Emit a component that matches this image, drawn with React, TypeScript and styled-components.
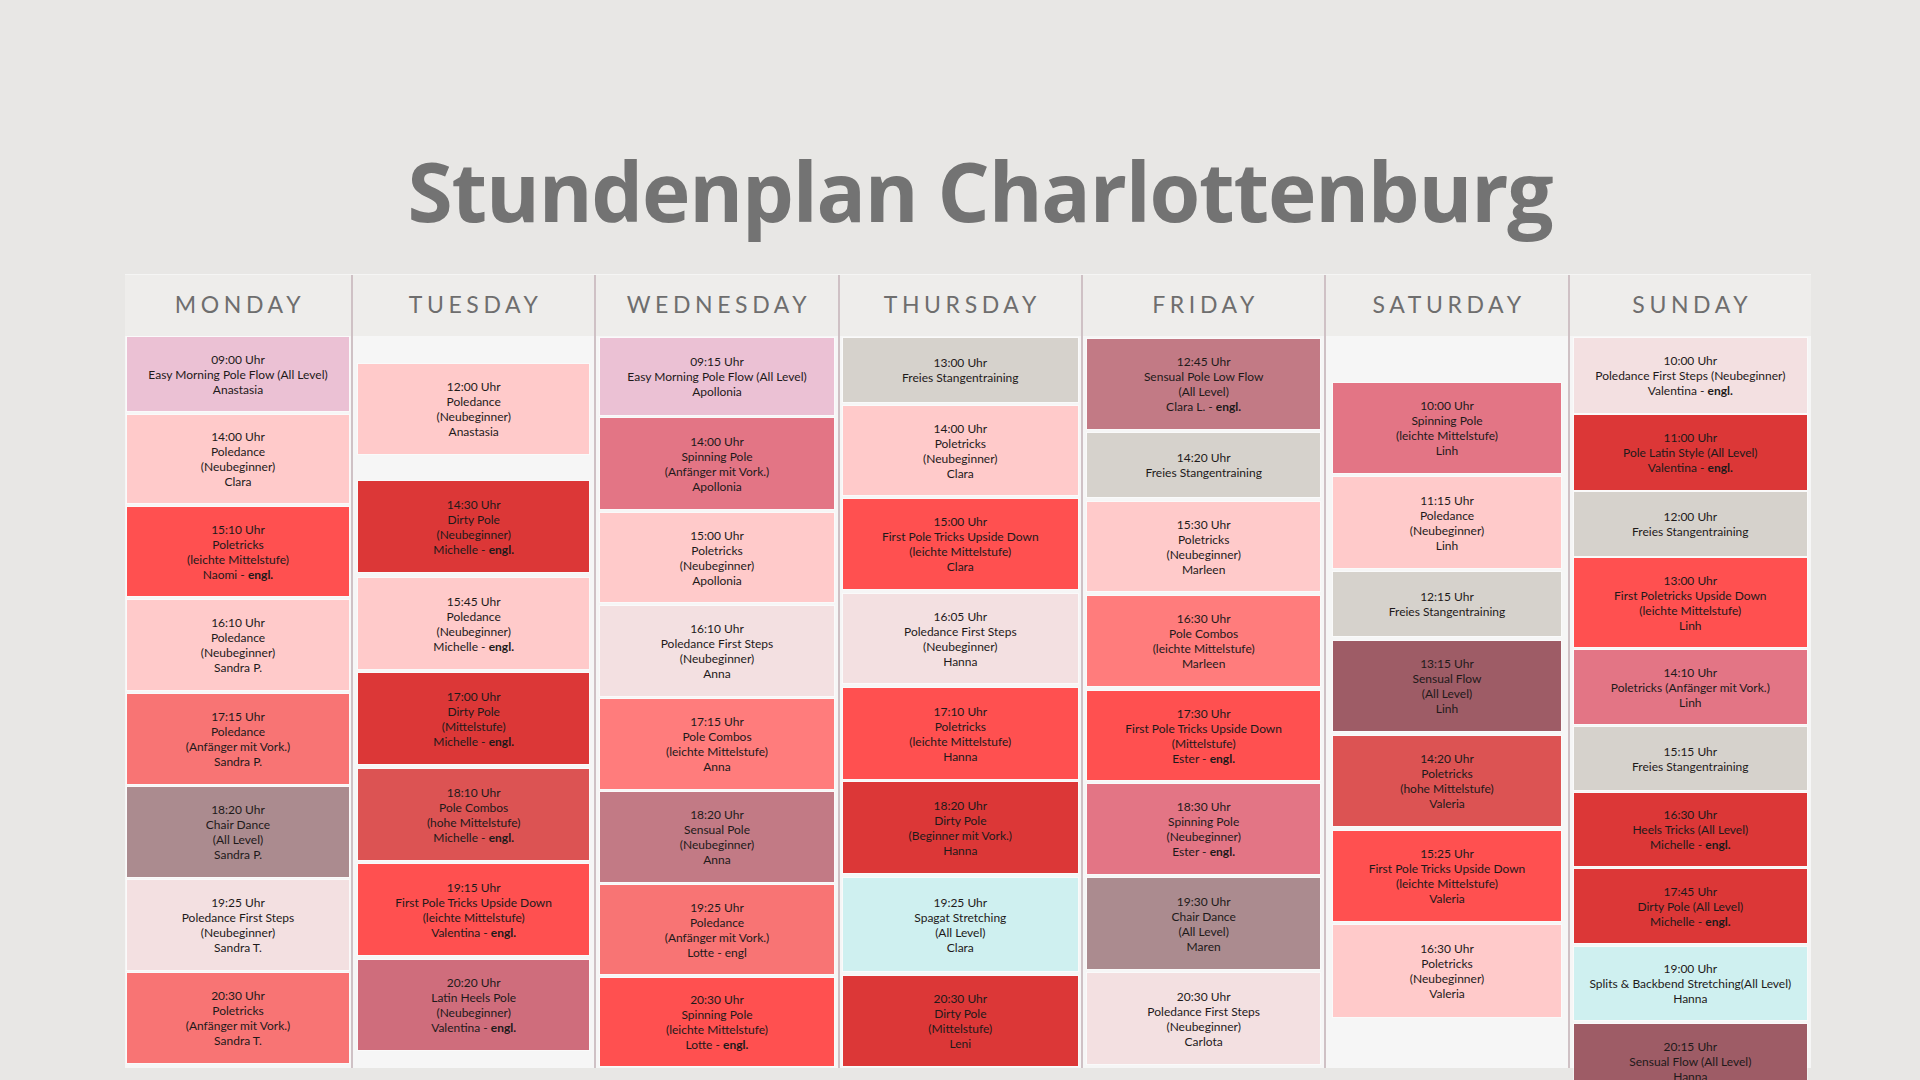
import React from "react";
import styled, { createGlobalStyle } from "styled-components";

const GlobalStyle = createGlobalStyle`
  html, body {
    margin: 0;
    padding: 0;
    overflow: hidden;
    background: #e8e7e5;
  }
  * { box-sizing: border-box; }
`;

const COLORS = {
  lilac: "#ebc1d4",
  blush: "#ffcaca",
  red: "#ff5050",
  salmon: "#f87474",
  mauve: "#ab8b8f",
  shell: "#f3e0e1",
  crimson: "#dc3737",
  brick: "#dc5353",
  rose: "#cf6d7c",
  pink: "#e37585",
  coral: "#ff7c7c",
  dusty: "#c27a85",
  stone: "#d6d2cc",
  ice: "#cff0f0",
  wine: "#9e5c66",
};

type Tone = keyof typeof COLORS;

type Lesson = {
  gap: number;
  h: number;
  tone: Tone;
  lines: string[];
  engl?: boolean;
};

type Day = {
  name: string;
  padX: number;
  lessons: Lesson[];
};

const days: Day[] = [
  {
    name: "Monday",
    padX: 2,
    lessons: [
      { gap: 1, h: 74, tone: "lilac", lines: ["09:00 Uhr", "Easy Morning Pole Flow (All Level)", "Anastasia"] },
      { gap: 4, h: 88, tone: "blush", lines: ["14:00 Uhr", "Poledance", "(Neubeginner)", "Clara"] },
      { gap: 4, h: 89, tone: "red", lines: ["15:10 Uhr", "Poletricks", "(leichte Mittelstufe)", "Naomi"], engl: true },
      { gap: 4, h: 90, tone: "blush", lines: ["16:10 Uhr", "Poledance", "(Neubeginner)", "Sandra P."] },
      { gap: 4, h: 90, tone: "salmon", lines: ["17:15 Uhr", "Poledance", "(Anfänger mit Vork.)", "Sandra P."] },
      { gap: 3, h: 90, tone: "mauve", lines: ["18:20 Uhr", "Chair Dance", "(All Level)", "Sandra P."] },
      { gap: 3, h: 90, tone: "shell", lines: ["19:25 Uhr", "Poledance First Steps", "(Neubeginner)", "Sandra T."] },
      { gap: 3, h: 90, tone: "salmon", lines: ["20:30 Uhr", "Poletricks", "(Anfänger mit Vork.)", "Sandra T."] },
    ],
  },
  {
    name: "Tuesday",
    padX: 5,
    lessons: [
      { gap: 28, h: 90, tone: "blush", lines: ["12:00 Uhr", "Poledance", "(Neubeginner)", "Anastasia"] },
      { gap: 27, h: 91, tone: "crimson", lines: ["14:30 Uhr", "Dirty Pole", "(Neubeginner)", "Michelle"], engl: true },
      { gap: 6, h: 91, tone: "blush", lines: ["15:45 Uhr", "Poledance", "(Neubeginner)", "Michelle"], engl: true },
      { gap: 4, h: 91, tone: "crimson", lines: ["17:00 Uhr", "Dirty Pole", "(Mittelstufe)", "Michelle"], engl: true },
      { gap: 5, h: 91, tone: "brick", lines: ["18:10 Uhr", "Pole Combos", "(hohe Mittelstufe)", "Michelle"], engl: true },
      { gap: 4, h: 91, tone: "red", lines: ["19:15 Uhr", "First Pole Tricks Upside Down", "(leichte Mittelstufe)", "Valentina"], engl: true },
      { gap: 5, h: 90, tone: "rose", lines: ["20:20 Uhr", "Latin Heels Pole", "(Neubeginner)", "Valentina"], engl: true },
    ],
  },
  {
    name: "Wednesday",
    padX: 4,
    lessons: [
      { gap: 2, h: 77, tone: "lilac", lines: ["09:15 Uhr", "Easy Morning Pole Flow (All Level)", "Apollonia"] },
      { gap: 3, h: 91, tone: "pink", lines: ["14:00 Uhr", "Spinning Pole", "(Anfänger mit Vork.)", "Apollonia"] },
      { gap: 4, h: 89, tone: "blush", lines: ["15:00 Uhr", "Poletricks", "(Neubeginner)", "Apollonia"] },
      { gap: 4, h: 90, tone: "shell", lines: ["16:10 Uhr", "Poledance First Steps", "(Neubeginner)", "Anna"] },
      { gap: 3, h: 90, tone: "coral", lines: ["17:15 Uhr", "Pole Combos", "(leichte Mittelstufe)", "Anna"] },
      { gap: 3, h: 90, tone: "dusty", lines: ["18:20 Uhr", "Sensual Pole", "(Neubeginner)", "Anna"] },
      { gap: 3, h: 89, tone: "salmon", lines: ["19:25 Uhr", "Poledance", "(Anfänger mit Vork.)", "Lotte - engl"] },
      { gap: 4, h: 88, tone: "red", lines: ["20:30 Uhr", "Spinning Pole", "(leichte Mittelstufe)", "Lotte"], engl: true },
    ],
  },
  {
    name: "Thursday",
    padX: 3,
    lessons: [
      { gap: 2, h: 64, tone: "stone", lines: ["13:00 Uhr", "Freies Stangentraining"] },
      { gap: 4, h: 89, tone: "blush", lines: ["14:00 Uhr", "Poletricks", "(Neubeginner)", "Clara"] },
      { gap: 4, h: 90, tone: "red", lines: ["15:00 Uhr", "First Pole Tricks Upside Down", "(leichte Mittelstufe)", "Clara"] },
      { gap: 5, h: 89, tone: "shell", lines: ["16:05 Uhr", "Poledance First Steps", "(Neubeginner)", "Hanna"] },
      { gap: 5, h: 91, tone: "red", lines: ["17:10 Uhr", "Poletricks", "(leichte Mittelstufe)", "Hanna"] },
      { gap: 3, h: 91, tone: "crimson", lines: ["18:20 Uhr", "Dirty Pole", "(Beginner mit Vork.)", "Hanna"] },
      { gap: 5, h: 93, tone: "ice", lines: ["19:25 Uhr", "Spagat Stretching", "(All Level)", "Clara"] },
      { gap: 5, h: 90, tone: "crimson", lines: ["20:30 Uhr", "Dirty Pole", "(Mittelstufe)", "Leni"] },
    ],
  },
  {
    name: "Friday",
    padX: 4,
    lessons: [
      { gap: 3, h: 90, tone: "dusty", lines: ["12:45 Uhr", "Sensual Pole Low Flow", "(All Level)", "Clara L."], engl: true },
      { gap: 4, h: 64, tone: "stone", lines: ["14:20 Uhr", "Freies Stangentraining"] },
      { gap: 5, h: 89, tone: "blush", lines: ["15:30 Uhr", "Poletricks", "(Neubeginner)", "Marleen"] },
      { gap: 5, h: 90, tone: "coral", lines: ["16:30 Uhr", "Pole Combos", "(leichte Mittelstufe)", "Marleen"] },
      { gap: 5, h: 89, tone: "red", lines: ["17:30 Uhr", "First Pole Tricks Upside Down", "(Mittelstufe)", "Ester"], engl: true },
      { gap: 4, h: 90, tone: "pink", lines: ["18:30 Uhr", "Spinning Pole", "(Neubeginner)", "Ester"], engl: true },
      { gap: 4, h: 91, tone: "mauve", lines: ["19:30 Uhr", "Chair Dance", "(All Level)", "Maren"] },
      { gap: 4, h: 91, tone: "shell", lines: ["20:30 Uhr", "Poledance First Steps", "(Neubeginner)", "Carlota"] },
    ],
  },
  {
    name: "Saturday",
    padX: 7,
    lessons: [
      { gap: 47, h: 90, tone: "pink", lines: ["10:00 Uhr", "Spinning Pole", "(leichte Mittelstufe)", "Linh"] },
      { gap: 4, h: 91, tone: "blush", lines: ["11:15 Uhr", "Poledance", "(Neubeginner)", "Linh"] },
      { gap: 4, h: 64, tone: "stone", lines: ["12:15 Uhr", "Freies Stangentraining"] },
      { gap: 5, h: 90, tone: "wine", lines: ["13:15 Uhr", "Sensual Flow", "(All Level)", "Linh"] },
      { gap: 5, h: 90, tone: "brick", lines: ["14:20 Uhr", "Poletricks", "(hohe Mittelstufe)", "Valeria"] },
      { gap: 5, h: 90, tone: "red", lines: ["15:25 Uhr", "First Pole Tricks Upside Down", "(leichte Mittelstufe)", "Valeria"] },
      { gap: 4, h: 92, tone: "blush", lines: ["16:30 Uhr", "Poletricks", "(Neubeginner)", "Valeria"] },
    ],
  },
  {
    name: "Sunday",
    padX: 4,
    lessons: [
      { gap: 2, h: 75, tone: "shell", lines: ["10:00 Uhr", "Poledance First Steps (Neubeginner)", "Valentina"], engl: true },
      { gap: 2, h: 75, tone: "crimson", lines: ["11:00 Uhr", "Pole Latin Style (All Level)", "Valentina"], engl: true },
      { gap: 2, h: 64, tone: "stone", lines: ["12:00 Uhr", "Freies Stangentraining"] },
      { gap: 2, h: 89, tone: "red", lines: ["13:00 Uhr", "First Poletricks Upside Down", "(leichte Mittelstufe)", "Linh"] },
      { gap: 3, h: 74, tone: "pink", lines: ["14:10 Uhr", "Poletricks (Anfänger mit Vork.)", "Linh"] },
      { gap: 3, h: 63, tone: "stone", lines: ["15:15 Uhr", "Freies Stangentraining"] },
      { gap: 3, h: 73, tone: "crimson", lines: ["16:30 Uhr", "Heels Tricks (All Level)", "Michelle"], engl: true },
      { gap: 3, h: 74, tone: "crimson", lines: ["17:45 Uhr", "Dirty Pole (All Level)", "Michelle"], engl: true },
      { gap: 4, h: 73, tone: "ice", lines: ["19:00 Uhr", "Splits & Backbend Stretching(All Level)", "Hanna"] },
      { gap: 4, h: 75, tone: "wine", lines: ["20:15 Uhr", "Sensual Flow (All Level)", "Hanna"] },
    ],
  },
];

const Page = styled.div`
  width: 1920px;
  height: 1080px;
  padding: 149px 0 0 125px;
  font-family: Lato, "Liberation Sans", sans-serif;
`;

const Title = styled.h1`
  width: 1686px;
  margin: 0 0 43px;
  padding-left: 24px;
  height: 82px;
  line-height: 82px;
  text-align: center;
  font-family: "Open Sans", "Liberation Sans", sans-serif;
  font-weight: 700;
  font-size: 82px;
  letter-spacing: -1.2px;
  color: #737373;
`;

const Timetable = styled.div`
  display: grid;
  grid-template-columns: 226px repeat(6, 1fr);
  width: 1686px;
  border-top: 1px solid #f5f5f4;
`;

const Column = styled.section<{ $first?: boolean }>`
  display: flex;
  flex-direction: column;
  border-left: ${({ $first }) => ($first ? "none" : "2px solid #cfc1c5")};
`;

const DayHeader = styled.div`
  height: 61px;
  display: flex;
  align-items: center;
  justify-content: center;
  background: #eeedeb;
  font-family: Lato, "Liberation Sans", sans-serif;
  font-size: 23px;
  font-weight: 400;
  letter-spacing: 4.6px;
  text-transform: uppercase;
  color: #6e6e6e;
  padding: 0 0 4px 4px;
`;

const DayBody = styled.div<{ $padX: number }>`
  height: 732px;
  display: flex;
  flex-direction: column;
  background: #f6f6f6;
  padding: 0 ${({ $padX }) => $padX}px;
`;

const Card = styled.div<{ $gap: number; $h: number; $tone: Tone }>`
  flex: none;
  margin-top: ${({ $gap }) => $gap}px;
  height: ${({ $h }) => $h}px;
  display: flex;
  flex-direction: column;
  align-items: center;
  justify-content: center;
  background: ${({ $tone }) => COLORS[$tone]};
  box-shadow: 0 0 0 1px rgba(255, 255, 255, 0.45);
  text-align: center;
`;

const Line = styled.div`
  font-family: Lato, "Liberation Sans", sans-serif;
  font-size: 12px;
  line-height: 15px;
  color: #1e1a1a;
  white-space: nowrap;
`;

const Engl = styled.b`
  font-weight: 700;
`;

function LessonCard({ lesson }: { lesson: Lesson }) {
  const last = lesson.lines.length - 1;
  return (
    <Card $gap={lesson.gap} $h={lesson.h} $tone={lesson.tone}>
      {lesson.lines.map((text, i) => (
        <Line key={i}>
          {text}
          {lesson.engl && i === last && (
            <>
              {" - "}
              <Engl>engl.</Engl>
            </>
          )}
        </Line>
      ))}
    </Card>
  );
}

export default function App() {
  return (
    <>
      <GlobalStyle />
      <Page>
        <Title>Stundenplan Charlottenburg</Title>
        <Timetable>
          {days.map((day, i) => (
            <Column key={day.name} $first={i === 0}>
              <DayHeader>{day.name}</DayHeader>
              <DayBody $padX={day.padX}>
                {day.lessons.map((lesson, j) => (
                  <LessonCard key={j} lesson={lesson} />
                ))}
              </DayBody>
            </Column>
          ))}
        </Timetable>
      </Page>
    </>
  );
}
